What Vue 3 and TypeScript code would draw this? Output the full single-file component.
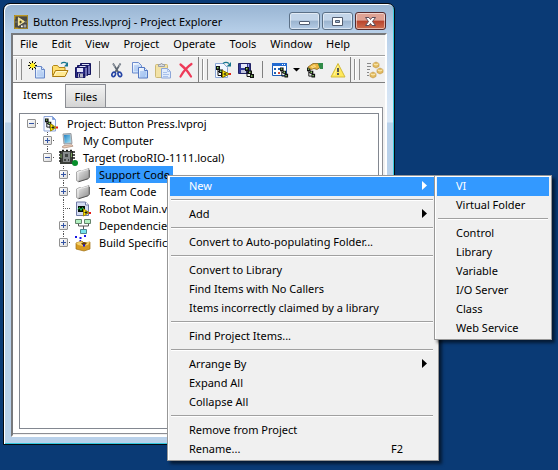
<script setup lang="ts">
import { ref } from 'vue'

interface TreeRow {
  label: string
  icon: string
  level: number
  sign?: '+' | '-'
  last?: boolean
}

interface MenuEntry {
  label?: string
  shortcut?: string
  submenu?: boolean
}

interface Tool {
  icon: string
  name: string
}

const menuBar: string[] = ['File', 'Edit', 'View', 'Project', 'Operate', 'Tools', 'Window', 'Help']

const toolGroups: Tool[][] = [
  [
    { icon: 'new', name: 'New' },
    { icon: 'open', name: 'Open' },
    { icon: 'save-all', name: 'Save all' },
    { icon: 'divider', name: '' },
    { icon: 'cut', name: 'Cut' },
    { icon: 'copy', name: 'Copy' },
    { icon: 'paste', name: 'Paste' },
    { icon: 'delete', name: 'Delete' },
  ],
  [
    { icon: 'open-project', name: 'Open project' },
    { icon: 'save-project', name: 'Save project' },
    { icon: 'divider', name: '' },
    { icon: 'filter', name: 'Filter view' },
    { icon: 'caret', name: 'Filter options' },
    { icon: 'resolve', name: 'Resolve conflicts' },
    { icon: 'warning', name: 'Warnings' },
  ],
  [{ icon: 'build', name: 'Build all' }],
]

const rows: TreeRow[] = [
  { label: 'Project: Button Press.lvproj', icon: 'project', level: 0, sign: '-' },
  { label: 'My Computer', icon: 'computer', level: 1, sign: '+' },
  { label: 'Target (roboRIO-1111.local)', icon: 'target', level: 1, sign: '-', last: true },
  { label: 'Support Code', icon: 'folder', level: 2, sign: '+' },
  { label: 'Team Code', icon: 'folder', level: 2, sign: '+' },
  { label: 'Robot Main.vi', icon: 'vi', level: 2 },
  { label: 'Dependencies', icon: 'deps', level: 2, sign: '+' },
  { label: 'Build Specifications', icon: 'spec', level: 2, sign: '+', last: true },
]

const contextMenu: MenuEntry[] = [
  { label: 'New', submenu: true },
  {},
  { label: 'Add', submenu: true },
  {},
  { label: 'Convert to Auto-populating Folder...' },
  {},
  { label: 'Convert to Library' },
  { label: 'Find Items with No Callers' },
  { label: 'Items incorrectly claimed by a library' },
  {},
  { label: 'Find Project Items...' },
  {},
  { label: 'Arrange By', submenu: true },
  { label: 'Expand All' },
  { label: 'Collapse All' },
  {},
  { label: 'Remove from Project' },
  { label: 'Rename...', shortcut: 'F2' },
]

const newMenu: MenuEntry[] = [
  { label: 'VI' },
  { label: 'Virtual Folder' },
  {},
  { label: 'Control' },
  { label: 'Library' },
  { label: 'Variable' },
  { label: 'I/O Server' },
  { label: 'Class' },
  { label: 'Web Service' },
]

const selected = ref('Support Code')
const activeItem = ref('New')
const activeSub = ref('VI')
</script>

<template>
  <div class="desktop">
    <svg class="defs" aria-hidden="true">
      <defs>
        <linearGradient id="paper" x1="0" y1="0" x2="1" y2="1">
          <stop offset="0" stop-color="#fff" /><stop offset="1" stop-color="#a9cbf5" />
        </linearGradient>
        <linearGradient id="gray" x1="0" y1="0" x2="1" y2="1">
          <stop offset="0" stop-color="#f2f2f2" /><stop offset="1" stop-color="#8c8c8c" />
        </linearGradient>
        <linearGradient id="screen" x1="0" y1="0" x2="1" y2="1">
          <stop offset="0" stop-color="#1f80c4" /><stop offset="1" stop-color="#a5e6f7" />
        </linearGradient>
      </defs>
      <symbol id="i-nodes" viewBox="0 0 10 11">
        <path d="M2 2v7.500h4M2 5.500h3" fill="none" stroke="#111" />
        <path d="M0 0h4v4H0zM3 3.500h4v3.500H3zM5 7h4v4H5z" fill="#111" />
        <path d="M1 1h1.500v1.500H1zM4 4.500h1.500v1.500H4zM6 8.200h1.500v1.500H6z" fill="#8dd86c" />
      </symbol>
      <symbol id="i-app" viewBox="0 0 16 16">
        <rect x="0.500" y="0.500" width="15" height="15" fill="#4b4a45" stroke="#a3841f" />
        <path d="M1 1h14M1 15h4M1 1v4" stroke="#dbae22" fill="none" />
        <path d="M5 3v9l7-4.500z" fill="#f3dc74" stroke="#fff4bd" />
        <path d="M1 8h3M12 8h3" stroke="#8e8b6a" /><path d="M6 8h3M7.500 6.500v3" stroke="#3b3928" />
        <path d="M8 12h2v2H8zM11 11h3v1h-3zM11 13h3v1h-3z" fill="#fff" />
      </symbol>
      <symbol id="i-new" viewBox="0 0 18 18">
        <path d="M7.500 5.500h6l3 3v8.500h-9z" fill="url(#paper)" stroke="#6887c7" />
        <path d="M13.500 5.500v3h3" fill="#dbe9ff" stroke="#6887c7" />
        <path d="M9 10h5M9 12h6M9 14h6" stroke="#a7c2ee" />
        <path d="M4.500 0.500v8M0.500 4.500h8M2 2l5 5M7 2L2 7" stroke="#ffee16" stroke-width="1.400" />
        <path d="M4 0h1v2H4zM1 1h1v1H1zM7 1h1v1H7zM0 4h2v1H0zM7 4h2v1H7zM2 2h1v1H2zM6 2h1v1H6zM2 6h1v1H2zM4 7h1v2H4zM1 7h1v1H1zM6 6h1v1H6zM7 7h1v1H7z" fill="#111" />
      </symbol>
      <symbol id="i-open" viewBox="0 0 18 18">
        <path d="M1.500 14.500V5.500l1-1h4l1.500 2h6v3" fill="#ffdf70" stroke="#b38616" />
        <path d="M1.500 15.500l3-6h12.500l-3 6z" fill="#ffe992" stroke="#aa7b10" />
        <path d="M3.500 14.500l2.200-4h9.500" stroke="#fff8d0" fill="none" />
        <path d="M10 2.500c2-1.500 4-1.500 6 0" stroke="#16758e" stroke-width="1.200" fill="none" />
        <path d="M17 1v4.500h-4z" fill="#16758e" />
      </symbol>
      <symbol id="i-save-all" viewBox="0 0 18 18">
        <path d="M6.500 2.500h10v11h-10zM3.500 4.500h10v10h-10zM1.500 6.500h9.500v10H1.500z" fill="#2a2a86" stroke="#15155c" />
        <path d="M8 3h7v1H8zM5.500 5h6v1h-6z" fill="#dce0f7" />
        <path d="M3 7h6v4H3z" fill="#e4e4fa" />
        <path d="M4 12.500h5v4H4z" fill="#b8b8c8" /><path d="M5 13h1v3H5z" fill="#202070" />
        <path d="M12 7v8M15 5v8" stroke="#babbed" />
      </symbol>
      <symbol id="i-cut" viewBox="0 0 18 18">
        <path d="M5 2.500l5.500 9M12.500 2.500l-5.500 9" stroke="#5c6672" stroke-width="1.700" />
        <path d="M5.500 3l1 3M12 3l-1 3" stroke="#b7bdc6" stroke-width="0.700" />
        <ellipse cx="5.700" cy="13.400" rx="1.700" ry="2.300" fill="none" stroke="#2544a5" stroke-width="1.600" transform="rotate(25 5.700 13.400)" />
        <ellipse cx="11.800" cy="13.400" rx="1.700" ry="2.300" fill="none" stroke="#2544a5" stroke-width="1.600" transform="rotate(-25 11.800 13.400)" />
      </symbol>
      <symbol id="i-copy" viewBox="0 0 18 18">
        <path d="M1.500 1.500h6l3 3v7.500h-9z" fill="url(#paper)" stroke="#6d8cce" />
        <path d="M3 5h5M3 7h5M3 9h4" stroke="#9cbcf0" />
        <path d="M7.500 6.500h6l3 3v7.500h-9z" fill="url(#paper)" stroke="#5478c2" />
        <path d="M13.500 6.500v3h3" fill="#e8f1ff" stroke="#5478c2" /><path d="M9 11h6M9 13h6M9 15h5" stroke="#8eb3ed" />
      </symbol>
      <symbol id="i-paste" viewBox="0 0 18 18">
        <rect x="1.500" y="3.500" width="12" height="13" rx="1" fill="#f2e2a6" stroke="#cdb976" />
        <path d="M4.500 5.500v-2h2l1-1.500 1 1.500h2v2z" fill="#d5d9df" stroke="#9ba0a9" />
        <path d="M7.500 7.500h6l3 3v6.500h-9z" fill="#e0ecfd" stroke="#8ca6d8" />
        <path d="M13.500 7.500v3h3M9 11.500h4M9 13.500h6M9 15.500h5" stroke="#a8c1eb" fill="none" />
      </symbol>
      <symbol id="i-delete" viewBox="0 0 18 18">
        <path d="M3.500 3.500c4 3 7.500 7 10.500 12M14.500 3C10 6 6 11 3.500 15.500" stroke="#ee3a58" stroke-width="2.200" fill="none" stroke-linecap="round" />
      </symbol>
      <symbol id="i-open-project" viewBox="0 0 18 18">
        <path d="M1.500 2.500h8l4 4v10h-12z" fill="#f3f8ff" stroke="#89a5d6" />
        <path d="M9 2.500c2-1.500 4-1.500 6 0" stroke="#16758e" fill="none" stroke-width="1.300" /><path d="M17 1v4.500h-4.500z" fill="#16758e" />
        <use href="#i-nodes" x="2" y="5" width="10" height="11" />
        <path d="M8.500 9.500v7l7-3.500z" fill="#fff000" stroke="#8c7600" /><path d="M15 12h2v2h-2z" fill="#e1251b" /><path d="M9.500 13h3M11 11.500v3" stroke="#222" />
      </symbol>
      <symbol id="i-save-project" viewBox="0 0 18 18">
        <path d="M1.500 2.500h12v10h-12z" fill="#303895" stroke="#222364" />
        <path d="M4 3h6v4H4z" fill="#e4e7fb" /><path d="M11 3h1v4h-1z" fill="#aab1e5" /><path d="M4 9h5v3H4z" fill="#bfc2dc" />
        <use href="#i-nodes" x="8" y="6" width="10" height="11" />
      </symbol>
      <symbol id="i-filter" viewBox="0 0 18 18">
        <path d="M1.500 2.500h14v12h-14z" fill="#fff" stroke="#1d5db9" /><path d="M1 2h15v3H1z" fill="#236bd1" />
        <path d="M11 3h1v1h-1zM13 3h1v1h-1z" fill="#fff" />
        <path d="M3 7h2v2H3zM7 7h2v2H7zM3 11h2v2H3z" fill="#2463b3" /><path d="M7 11h2v2H7z" fill="#d34936" />
        <use href="#i-nodes" x="9" y="6" width="9" height="11" />
      </symbol>
      <symbol id="i-caret" viewBox="0 0 12 18"><path d="M2 7h7L5.500 10.500z" fill="#000" /></symbol>
      <symbol id="i-resolve" viewBox="0 0 18 18">
        <use href="#i-nodes" x="1" y="6" width="9" height="11" />
        <path d="M2 6l5-3.500h5l2 4-3 2-3-1-3 1z" fill="#e9b43f" stroke="#87641c" stroke-width="0.800" />
        <path d="M12 2h5v6h-3z" fill="#318b48" /><path d="M5 6l4-2M6 7l4-2" stroke="#ffe18a" />
      </symbol>
      <symbol id="i-warning" viewBox="0 0 18 18">
        <path d="M9 2.500L16 16H2z" fill="#ffe95c" stroke="#d3bb3a" stroke-linejoin="round" /><path d="M9 5l-4 9" stroke="#fff6a0" />
        <path d="M8 7h2v4H8zM8 12h2v2H8z" fill="#565756" />
      </symbol>
      <symbol id="i-build" viewBox="0 0 18 18">
        <path d="M1 2.500h4M1 5.500h4M1 8.500h3M1 11.500h2M1 14.500h2" stroke="#888" />
        <g fill="#e3bc62" stroke="#bd913a" stroke-width="0.600">
          <path d="M7 2.500l3-1.500 3 1.500v3L10 7 7 5.500zM11 8.500L14 7l3 1.500v3L14 13l-3-1.500zM4 12.500L7 11l3 1.500v3L7 17l-3-1.500z" />
        </g>
        <path d="M7.500 2.800L10 4l2.500-1.200M11.500 8.800L14 10l2.500-1.200M4.500 12.800L7 14l2.500-1.200" stroke="#fff0ba" fill="none" />
      </symbol>
      <symbol id="i-project" viewBox="0 0 16 16">
        <path d="M1 0.500h8.500l3 3V15H1z" fill="#f8fbff" stroke="#8da5d9" /><path d="M9.500 0.500v3h3" fill="#6f99e0" stroke="#8da5d9" />
        <use href="#i-nodes" x="2" y="2" width="9" height="11" />
        <path d="M7.500 8v7l6-3.500z" fill="#ffea00" stroke="#a18c00" /><path d="M13 10.500h2v2h-2z" fill="#e51a16" /><path d="M8.500 11.500h3M10 10v3" stroke="#222" />
      </symbol>
      <symbol id="i-computer" viewBox="0 0 16 16">
        <path d="M4 1l8-.5 1 10-8 .5z" fill="#b9c3cb" stroke="#999fa5" />
        <path d="M5 2l6-.3.8 7.600-6 .7z" fill="url(#screen)" />
        <path d="M5 12.500l8-.8 1 1.500-9 1.800-2-1z" fill="#eacdb9" stroke="#a98876" stroke-width="0.700" />
      </symbol>
      <symbol id="i-target" viewBox="0 0 16 16">
        <path d="M1 1h13v13H1z" fill="#3c3f3a" />
        <path d="M0 2h2M0 5h2M0 8h2M0 11h2M13 2h3M13 5h3M13 8h3M3 .5h2M7 .5h2M11 .5h2" stroke="#171a16" stroke-width="1.400" />
        <path d="M4 2h7v10H4z" fill="#85898a" /><path d="M6 4h3v3H6zM5 9h2v2H5zM9 9h1v2H9z" fill="#404442" /><path d="M2 4v4M12.500 3v4" stroke="#7aa45d" />
        <circle cx="16" cy="13" r="3" fill="#078f2b" />
      </symbol>
      <symbol id="i-folder" viewBox="0 0 16 16">
        <path d="M1.500 5l3-1.500 2 .5L14 1.500v9L12 12l-9 2.500-1.500-1z" fill="url(#gray)" stroke="#9b9b9b" stroke-width="0.800" />
        <path d="M2 5.500l11-3M3 6v7.500" stroke="#fff" stroke-opacity="0.700" fill="none" /><path d="M3.500 14.800l9.500-3 1.300-1.500V3" stroke="#555" fill="none" />
      </symbol>
      <symbol id="i-vi" viewBox="0 0 16 16">
        <path d="M1.500 1h9l3 3v10.500h-12z" fill="#d4dcf3" stroke="#6f7aa6" /><path d="M10.500 1v3h3" fill="#fff" stroke="#6f7aa6" />
        <path d="M3 5h7v6H3z" fill="#050f08" /><path d="M3 8.500l1.500-2 1.500 3 1.500-3 1.500 2" fill="none" stroke="#24ca51" />
        <path d="M8.500 8v7l5.500-3.500z" fill="#ffea00" stroke="#a18c00" /><path d="M14 11h2v2h-2z" fill="#e51a16" /><path d="M9.500 11.500h3M11 10v3" stroke="#222" />
      </symbol>
      <symbol id="i-deps" viewBox="0 0 16 16">
        <path d="M3.500 5v3h10V5M8.500 8v3" fill="none" stroke="#555" />
        <path d="M0.500 1.500h6v4h-6zM9.500 1.500h6v4h-6z" fill="#b1efc0" stroke="#65846c" /><path d="M5.500 11.500h6v4h-6z" fill="#77e4ed" stroke="#4b8891" />
      </symbol>
      <symbol id="i-spec" viewBox="0 0 16 16">
        <path d="M0 1h2v2H0zM4.500 2h2v2h-2zM9 0h2v2H9zM4.500 5h1.500v1.500H4.500z" fill="#1717e5" />
        <path d="M1 8l6-2 2 2 6-1v7l-6 2-8-2z" fill="#d79b23" stroke="#9d6e13" stroke-width="0.700" />
        <path d="M1 8l5-1.500L9 8l6-1.500-2 3.500-5 1-5-1z" fill="#f4d06c" /><path d="M6 8.500l3-1.500 3 1-3 3z" fill="#663d07" /><path d="M8 9.500h2v2H8z" fill="#1717e5" />
      </symbol>
    </svg>

    <main class="window">
      <header class="titlebar">
        <svg class="app-icon"><use href="#i-app" /></svg>
        <h1>Button Press.lvproj - Project Explorer</h1>
        <div class="controls">
          <button class="control" type="button" aria-label="Minimize">
            <svg viewBox="0 0 13 9"><rect x="1.500" y="4.500" width="10" height="3" rx="0.500" fill="#fff" stroke="#515c70" /></svg>
          </button>
          <button class="control" type="button" aria-label="Maximize">
            <svg viewBox="0 0 13 9"><path d="M1.500.5h10v8h-10z" fill="#fff" stroke="#515c70" /><path d="M4.500 3.500h4v2h-4z" fill="#9fb7d2" stroke="#515c70" /></svg>
          </button>
          <button class="control close" type="button" aria-label="Close">
            <svg viewBox="0 0 13 9"><path d="M1.500.5h3.500l1.500 2L8 .5h3.500l-3 4 3 4H8l-1.500-2-1.500 2H1.500l3-4z" fill="#fff" stroke="#5c4c58" /></svg>
          </button>
        </div>
      </header>

      <div class="client">
        <nav class="menubar">
          <button v-for="m in menuBar" :key="m" type="button">{{ m }}</button>
        </nav>

        <div class="toolbar">
          <div v-for="(group, g) in toolGroups" :key="g" class="group">
            <span class="grip"></span>
            <template v-for="(tool, t) in group" :key="t">
              <span v-if="tool.icon === 'divider'" class="divider"></span>
              <button v-else type="button" :class="['tool', { narrow: tool.icon === 'caret' }]" :aria-label="tool.name">
                <svg><use :href="'#i-' + tool.icon" /></svg>
              </button>
            </template>
          </div>
        </div>

        <div class="tabs" role="tablist">
          <button class="tab current" type="button" role="tab" aria-selected="true">Items</button>
          <button class="tab" type="button" role="tab" aria-selected="false">Files</button>
          <span class="tab-rest"></span>
        </div>

        <section class="page">
          <ul class="tree" role="tree">
            <li v-for="row in rows" :key="row.label" role="treeitem" :class="['row', 'level-' + row.level, { last: row.last }]" @click="selected = row.label">
              <span class="branch">
                <span v-if="row.sign" :class="['expander', { plus: row.sign === '+' }]"></span>
              </span>
              <span :class="['dots', { wide: !row.sign }]"></span>
              <svg class="node-icon"><use :href="'#i-' + row.icon" /></svg>
              <span :class="['label', { selected: selected === row.label }]">{{ row.label }}</span>
            </li>
          </ul>
        </section>
      </div>
    </main>

    <div class="menu context" role="menu">
      <template v-for="(entry, i) in contextMenu" :key="i">
        <button v-if="entry.label" type="button" role="menuitem" :class="['item', { active: activeItem === entry.label }]" @mouseenter="activeItem = entry.label">
          <span class="text">{{ entry.label }}</span>
          <span v-if="entry.shortcut" class="shortcut">{{ entry.shortcut }}</span>
          <svg v-if="entry.submenu" class="arrow" viewBox="0 0 5 9"><path d="M0 0l5 4.500L0 9z" fill="currentColor" /></svg>
        </button>
        <hr v-else />
      </template>
    </div>

    <div class="menu sub" role="menu">
      <template v-for="(entry, i) in newMenu" :key="i">
        <button v-if="entry.label" type="button" role="menuitem" :class="['item', { active: activeSub === entry.label }]" @mouseenter="activeSub = entry.label">
          <span class="text">{{ entry.label }}</span>
        </button>
        <hr v-else />
      </template>
    </div>
  </div>
</template>

<style>
body {
  margin: 0;
  background: #0a3a75;
}
</style>

<style scoped>
.desktop {
  position: relative;
  box-sizing: border-box;
  min-height: 100vh;
  padding: 3px 163px 25px 3px;
  display: flex;
  overflow: hidden;
  background: #0a3a75;
  color: #000;
  font: 11px/17px "Noto Sans", "Open Sans", sans-serif;
}

.defs {
  position: absolute;
  width: 0;
  height: 0;
}

button {
  margin: 0;
  padding: 0;
  border: 0;
  background: none;
  color: inherit;
  font: inherit;
}

.window {
  flex: 1;
  min-width: 0;
  display: flex;
  flex-direction: column;
  padding: 0 7px 7px;
  border: 1px solid #05090f;
  border-radius: 7px 7px 0 0;
  background: linear-gradient(#98b4d2, #b9d1ea 30px, #d3e3f4 80px, #dce9f7 118px, #b9d1ea 119px);
  box-shadow: inset 1px 1px #fff, inset -1px -1px #35c9e0;
}

.titlebar {
  display: flex;
  align-items: center;
  height: 29px;
  padding: 0 1px 0 3px;
}

.app-icon {
  width: 14px;
  height: 14px;
  margin: 6px 5px 0 0;
}

.titlebar h1 {
  flex: 1;
  margin: 5px 0 0;
  font-size: 11px;
  font-weight: 400;
  white-space: nowrap;
}

.controls {
  display: flex;
  gap: 2px;
  margin-top: 5px;
}

.control {
  display: grid;
  place-items: center;
  width: 31px;
  height: 18px;
  box-sizing: border-box;
  border: 1px solid #5b7087;
  border-radius: 3px;
  background: linear-gradient(#c3d5e9 45%, #9bb4cf 50%, #b5cce6);
  box-shadow: inset 0 0 0 1px rgba(255, 255, 255, 0.5);
}

.control svg {
  width: 13px;
  height: 9px;
}

.close {
  border-color: #562a2c;
  background: linear-gradient(#dfa294 45%, #b8432d 50%, #cf6f50);
}

.client {
  flex: 1;
  display: flex;
  flex-direction: column;
  border: 2px solid;
  border-color: #77797c #fff #fff #77797c;
  background: #f0f0f0;
}

.menubar {
  display: flex;
  align-items: flex-start;
  gap: 14px;
  height: 20px;
  padding: 0 7px;
  border-bottom: 1px solid #a0a0a0;
}

.toolbar {
  display: flex;
  height: 25px;
  border-top: 1px solid #fff;
  border-bottom: 1px solid #808080;
  overflow: hidden;
}

.group {
  display: flex;
  align-items: center;
  padding: 0 1px 0 3px;
  border-right: 1px solid #808080;
}

.group:last-child {
  border: 0;
}

.grip {
  box-sizing: border-box;
  width: 6px;
  height: 21px;
  margin-right: 3px;
  border: solid #8f8f8f;
  border-width: 0 1px;
  background: linear-gradient(90deg, #fff 1px, transparent 1px);
}

.divider {
  width: 1px;
  height: 17px;
  margin: 0 5px;
  background: #808080;
}

.tool {
  display: grid;
  place-items: center;
  width: 23px;
  height: 23px;
}

.tool svg {
  width: 18px;
  height: 18px;
}

.tool.narrow,
.tool.narrow svg {
  width: 12px;
}

.tabs {
  display: flex;
  align-items: flex-end;
  height: 25px;
}

.tab {
  box-sizing: border-box;
  height: 24px;
  padding: 0 8px;
  border: 1px solid #8c8e94;
  background: linear-gradient(#f2f2f2, #e4e4e4 50%, #d4d4d4);
}

.tab.current {
  height: 25px;
  padding: 0 13px 2px 10px;
  border: 0;
  background: #fff;
}

.tab-rest {
  flex: 1;
  height: 1px;
  margin-right: 2px;
  background: #8c8e94;
}

.page {
  flex: 1;
  display: flex;
  margin: 0 2px 1px 0;
  padding: 5px 3px 4px 6px;
  border: solid #8c8e94;
  border-width: 0 1px 1px 0;
  background: #fff;
}

.tree {
  flex: 1;
  margin: 0;
  padding: 1px 0;
  border: 1px solid #828790;
  list-style: none;
}

.row {
  display: flex;
  align-items: center;
  height: 17px;
  white-space: nowrap;
}

.level-0 {
  padding-left: 7px;
}

.level-1 {
  padding-left: 23px;
}

.level-2 {
  padding-left: 39px;
}

.branch {
  display: grid;
  place-items: center;
  width: 9px;
  height: 17px;
  background: repeating-linear-gradient(#555 0 1px, #fff 1px 2px) 4px 0 / 1px 17px no-repeat;
}

.last .branch {
  background-size: 1px 8px;
}

.level-0 .branch {
  background: none;
}

.expander {
  box-sizing: border-box;
  width: 9px;
  height: 9px;
  border: 1px solid #919191;
  border-radius: 1px;
  background:
    linear-gradient(#3354a4, #3354a4) center / 5px 1px no-repeat,
    linear-gradient(135deg, #fff, #dcdcdc);
}

.expander.plus {
  background:
    linear-gradient(#3354a4, #3354a4) center / 5px 1px no-repeat,
    linear-gradient(#3354a4, #3354a4) center / 1px 5px no-repeat,
    linear-gradient(135deg, #fff, #dcdcdc);
}

.dots {
  width: 3px;
  height: 1px;
  margin-right: 4px;
  background: repeating-linear-gradient(90deg, #fff 0 1px, #555 1px 2px);
}

.dots.wide {
  width: 7px;
  margin: 0 4px 0 -4px;
}

.node-icon {
  width: 16px;
  height: 16px;
  margin-right: 5px;
  overflow: visible;
}

.node-icon use,
symbol {
  overflow: visible;
}

.label {
  padding: 0 3px;
}

.label.selected {
  background: #3399ff;
}

.menu {
  position: absolute;
  box-sizing: border-box;
  top: 175px;
  padding: 1px 4px 1px 2px;
  border: 1px solid #979797;
  background: #f0f0f0;
  box-shadow: inset 1px 1px #fff, 3px 3px 3px rgba(0, 0, 0, 0.55);
}

.context {
  left: 167px;
  width: 272px;
}

.sub {
  left: 434px;
  width: 118px;
  padding-right: 2px;
}

.item {
  display: flex;
  align-items: center;
  width: 100%;
  height: 19px;
  padding: 0 5px 2px 19px;
  text-align: left;
  white-space: nowrap;
}

.item.active {
  background: #3399ff;
  color: #fff;
}

.text {
  flex: 1;
}

.shortcut {
  width: 38px;
}

.arrow {
  width: 5px;
  height: 9px;
  margin-right: 2px;
}

.menu hr {
  height: 1px;
  margin: 3px 1px 4px;
  border: 0;
  border-top: 1px solid #a0a0a0;
  background: #fff;
}
</style>
